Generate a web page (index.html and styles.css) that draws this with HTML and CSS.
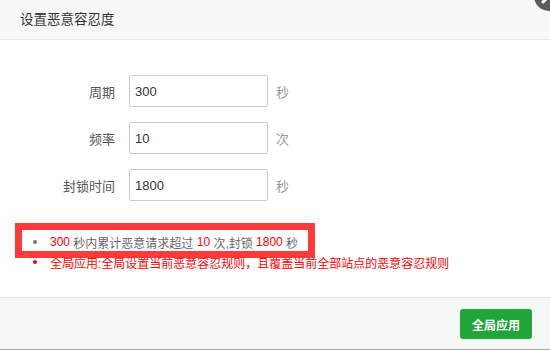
FILE: index.html
```html
<!DOCTYPE html>
<html lang="zh-CN">
<head>
<meta charset="utf-8">
<title>设置恶意容忍度</title>
<link rel="stylesheet" href="styles.css">
</head>
<body>
<div class="dialog">
  <div class="header">设置恶意容忍度</div>
  <span class="close">
    <svg width="30" height="30" viewBox="0 0 30 30"><path d="M9 9 L21 21 M21 9 L9 21" stroke="#fff" stroke-width="3" stroke-linecap="round"/></svg>
  </span>
  <div class="content">
    <div class="form">
      <div class="row"><label class="label">周期</label><input class="input" type="text" value="300"><span class="unit">秒</span></div>
      <div class="row"><label class="label">频率</label><input class="input" type="text" value="10"><span class="unit">次</span></div>
      <div class="row"><label class="label">封锁时间</label><input class="input" type="text" value="1800"><span class="unit">秒</span></div>
    </div>
    <ul class="notes">
      <li class="note"><span class="red">300</span>&nbsp;秒内累计恶意请求超过&nbsp;<span class="red">10</span>&nbsp;次,封锁&nbsp;<span class="red">1800</span>&nbsp;秒</li>
      <li class="note note-red">全局应用:全局设置当前恶意容忍规则，且覆盖当前全部站点的恶意容忍规则</li>
    </ul>
  </div>
  <div class="footer"><button class="btn">全局应用</button></div>
  <div class="highlight"></div>
</div>
</body>
</html>
```
FILE: styles.css
```css
html, body {
  margin: 0;
  padding: 0;
  width: 550px;
  height: 350px;
  overflow: hidden;
  background: #fff;
  font-family: "Liberation Sans", "Noto Sans CJK SC", sans-serif;
}
.dialog {
  position: relative;
  width: 550px;
  height: 350px;
  display: flex;
  flex-direction: column;
  box-sizing: border-box;
}
.header {
  height: 39px;
  line-height: 39px;
  background: #f8f8f8;
  border-bottom: 1px solid #e6e6e6;
  padding-left: 20px;
  font-size: 13.5px;
  color: #333;
}
.close {
  position: absolute;
  right: -14px;
  top: -19px;
  width: 30px;
  height: 30px;
  border-radius: 50%;
  background: #5b5b5b;
}
.close svg { display: block; }
.content {
  padding-top: 35px;
}
.form {
  display: flex;
  flex-direction: column;
  gap: 15px;
}
.row {
  display: flex;
  align-items: center;
  height: 32px;
}
.label {
  width: 115px;
  text-align: right;
  margin-right: 14px;
  font-size: 13px;
  color: #555;
}
.input {
  box-sizing: border-box;
  width: 139px;
  height: 32px;
  border: 1px solid #ccc;
  border-radius: 2px;
  padding: 0 5px;
  font-family: "Liberation Sans", "Noto Sans CJK SC", sans-serif;
  font-size: 13px;
  color: #333;
  outline: none;
}
.unit {
  margin-left: 8px;
  font-size: 13px;
  color: #999;
}
.notes {
  list-style: none;
  margin: 31px 0 0 0;
  padding: 0 0 0 33px;
}
.note {
  display: flex;
  align-items: center;
  height: 20px;
  font-size: 12px;
  color: #666;
  white-space: nowrap;
}
.note::before {
  content: "";
  width: 4px;
  height: 4px;
  border-radius: 50%;
  background: #777;
  margin-right: 13px;
}
.note-red { color: red; }
.note-red::before { background: red; }
.red { color: red; }
.footer {
  margin-top: auto;
  height: 40px;
  border-top: 1px solid #e6e6e6;
  border-bottom: 1px solid #a8a8a8;
  background: #f5f7f7;
  display: flex;
  justify-content: flex-end;
  align-items: flex-start;
  padding: 11px 18px 0 0;
  box-sizing: content-box;
}
.btn {
  width: 72px;
  height: 30px;
  border: none;
  border-radius: 3px;
  background: #20a53a;
  color: #fff;
  font-family: "Liberation Sans", "Noto Sans CJK SC", sans-serif;
  font-size: 12px;
  font-weight: bold;
  padding: 0;
}
.highlight {
  position: absolute;
  left: 15px;
  top: 223px;
  width: 300px;
  height: 35px;
  box-sizing: border-box;
  border: 7px solid #fe3a3a;
}
```
